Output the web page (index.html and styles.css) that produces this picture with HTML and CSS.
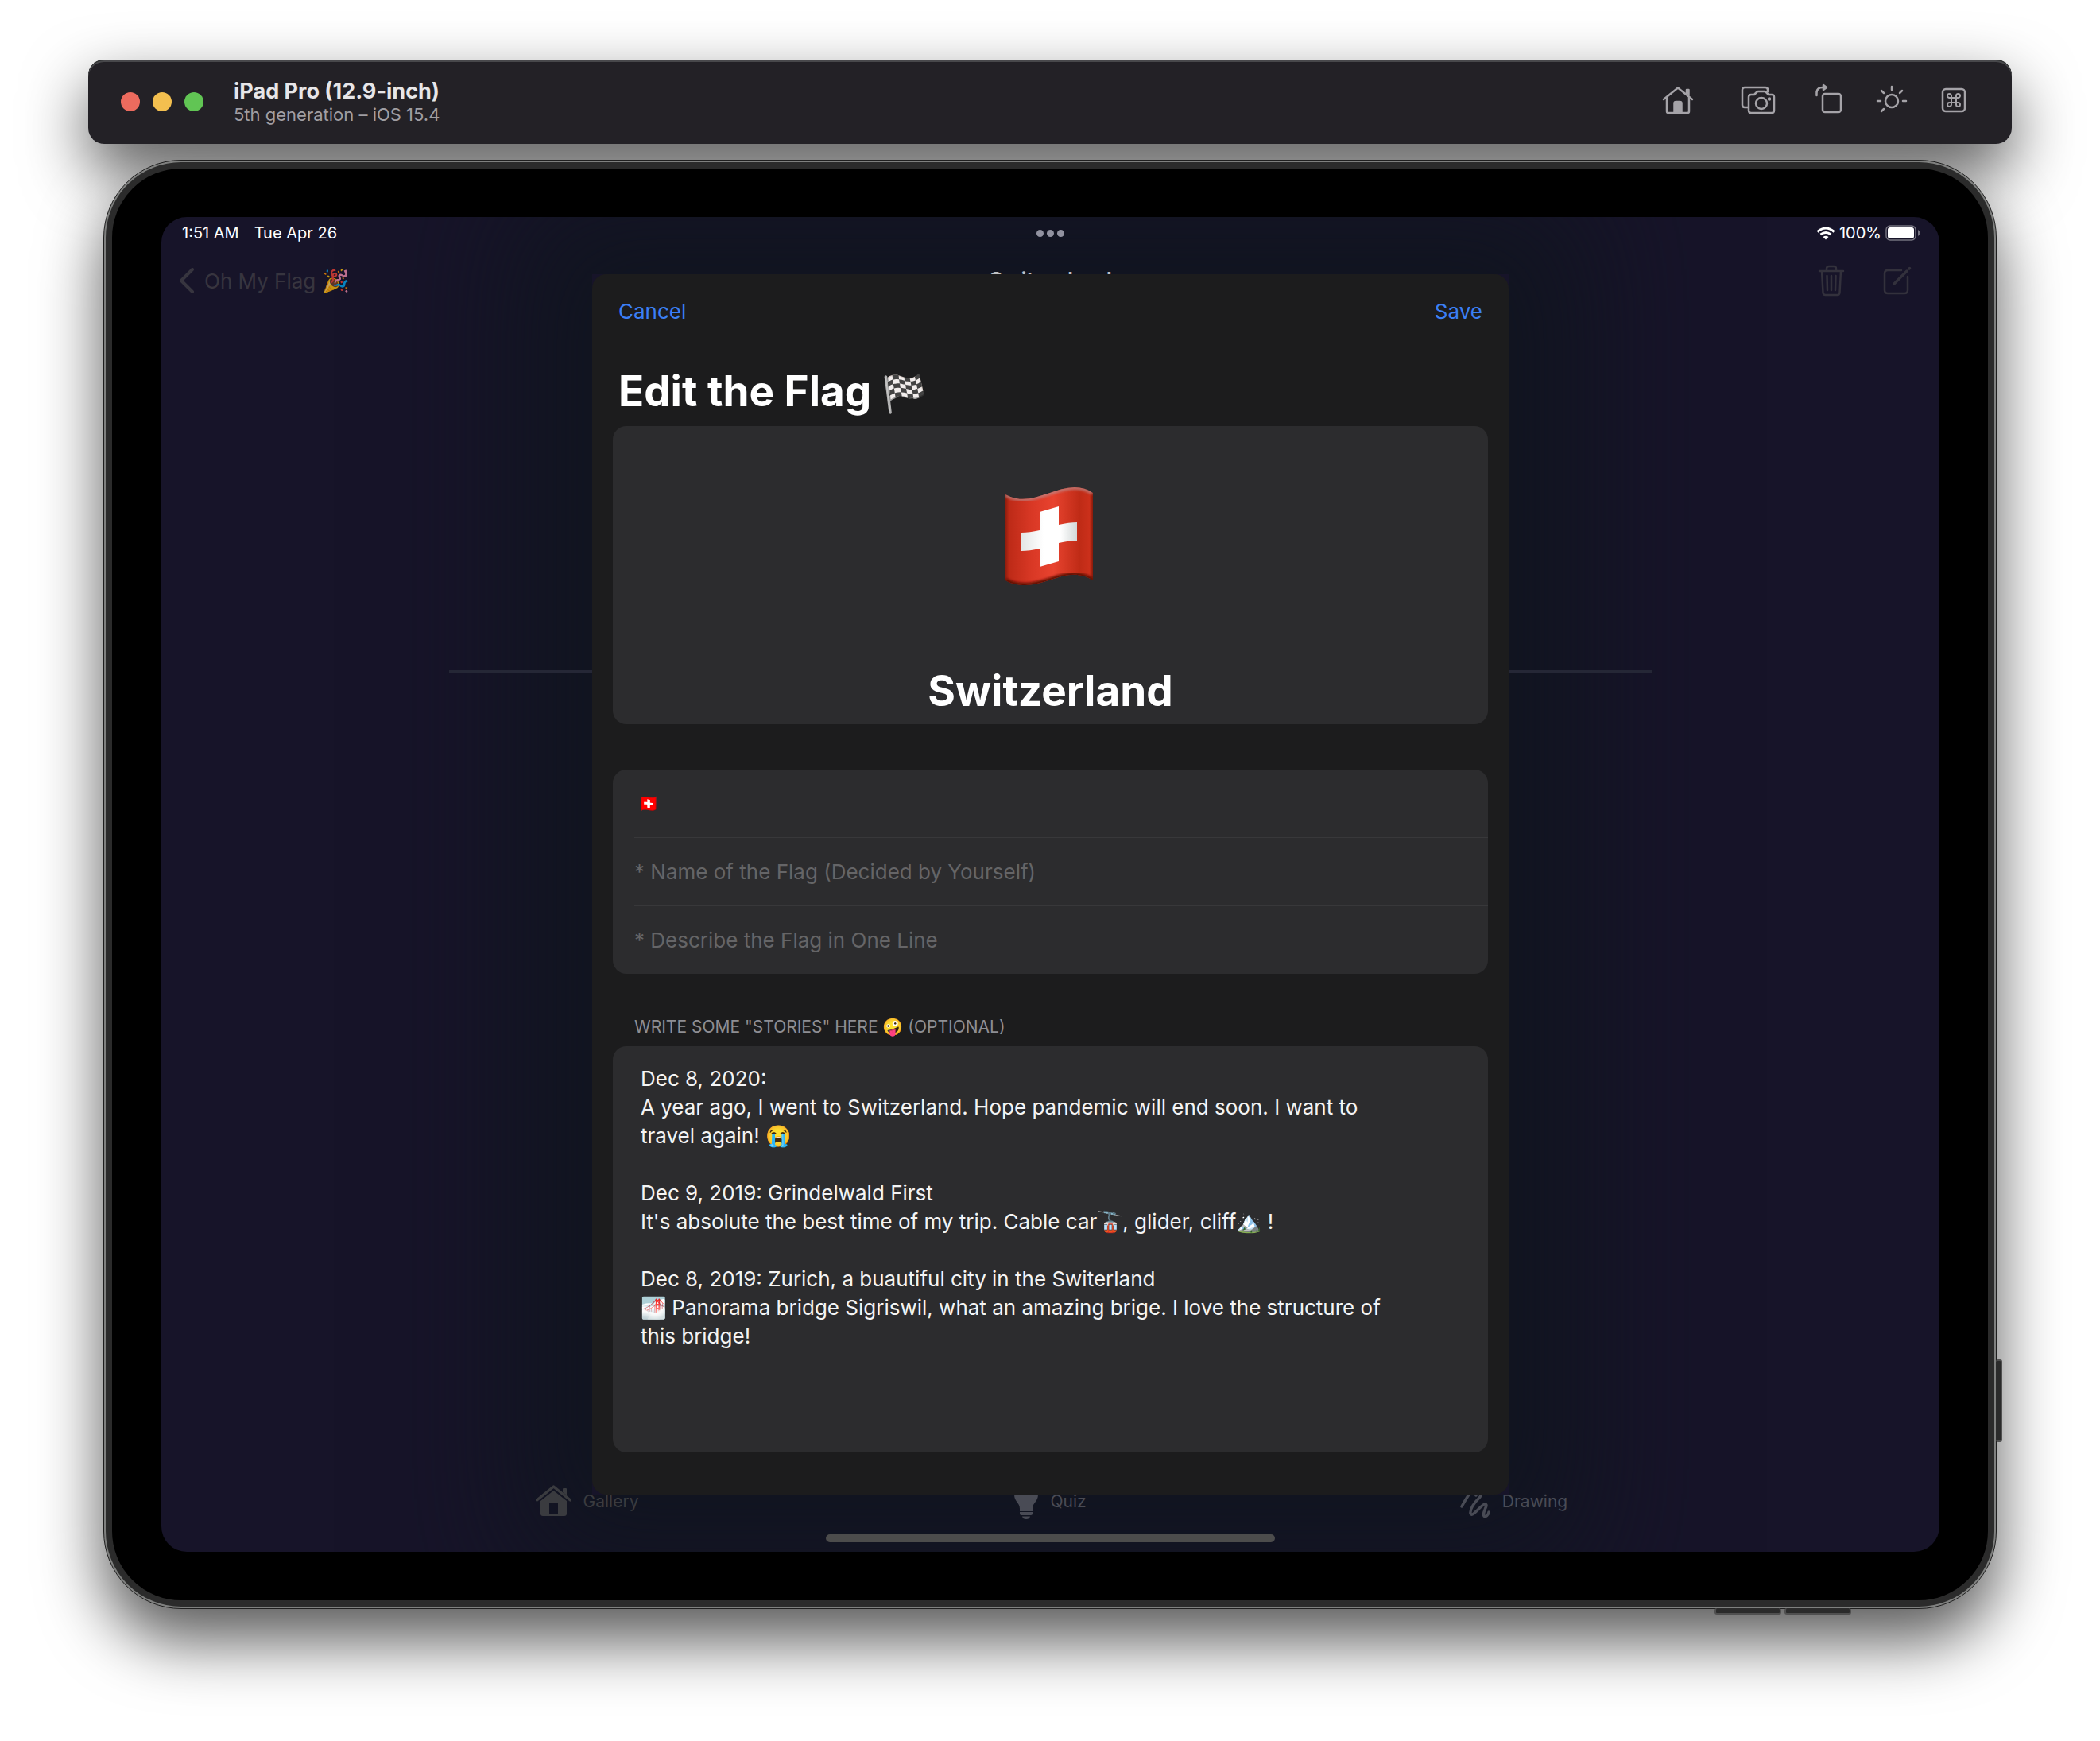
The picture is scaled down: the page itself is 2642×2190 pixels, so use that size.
FILE: index.html
```html
<!DOCTYPE html>
<html lang="en">
<head>
<meta charset="utf-8">
<meta name="viewport" content="width=device-width, initial-scale=1">
<title>iPad Pro (12.9-inch)</title>
<link rel="stylesheet" href="styles.css">
</head>
<body>
<header class="toolbar">
  <div class="lights">
    <button class="light light-close" aria-label="Close"></button>
    <button class="light light-min" aria-label="Minimize"></button>
    <button class="light light-zoom" aria-label="Zoom"></button>
  </div>
  <div class="window-title">
    <h1 class="device-name">iPad Pro (12.9-inch)</h1>
    <p class="device-os">5th generation – iOS 15.4</p>
  </div>
  <div class="tools">
    <button class="tool tool-home" aria-label="Home"><svg width="40" height="36" viewBox="0 0 40 36"><path d="M2 17 20 2.500 38 17M6 15V32Q6 34 8 34H32Q34 34 34 32V15M31 10V5H33.500V12"/><path class="solid" d="M15.500 34V22Q15.500 20 17.500 20H22.500Q24.500 20 24.500 22V34Z"/></svg></button>
    <button class="tool tool-camera" aria-label="Screenshot"><svg width="44" height="36" viewBox="0 0 44 36"><path d="M9 27H5Q2 27 2 24V5Q2 2 5 2H31Q34 2 34 5V7M13 11H17L20 8Q21 7 22 7H30Q31 7 32 8L35 11H39Q42 11 42 14V31Q42 34 39 34H13Q10 34 10 31V14Q10 11 13 11Z"/><circle cx="26" cy="22" r="7"/><circle class="solid" cx="36" cy="16.500" r="1"/></svg></button>
    <button class="tool" aria-label="Rotate"><svg width="34" height="42" viewBox="0 0 34 42"><rect x="9" y="13" width="23" height="23" rx="3"/><path d="M1.500 15V12Q1.500 5 9 5H10"/><path class="solid" d="M10 2 14 5 10 8Z"/></svg></button>
    <button class="tool" aria-label="Appearance"><svg width="40" height="38" viewBox="0 0 40 38"><circle cx="20" cy="20" r="8"/><path d="M20 2V6M33 7 30 10M38 20H34M2 20H6M7 7 10 10M7 33 10 30"/></svg></button>
    <button class="tool" aria-label="Keyboard"><svg width="32" height="32" viewBox="0 0 32 32"><rect x="2" y="2" width="28" height="28" rx="4"/><path class="thin" d="M13 13H10.500A2.500 2.500 0 1 1 13 10.500V21.500A2.500 2.500 0 1 1 10.500 19H21.500A2.500 2.500 0 1 1 19 21.500V10.500A2.500 2.500 0 1 1 21.500 13Z"/></svg></button>
  </div>
</header>

<main class="device">
  <span class="side-button side-button-top"></span>
  <span class="side-button side-button-down"></span>
  <span class="side-button side-button-up"></span>
  <div class="bezel">
    <div class="screen">
      <div class="backdrop">
        <div class="status">
          <div class="status-left"><span>1:51 AM</span><span>Tue Apr 26</span></div>
          <div class="dots"><i class="dot"></i><i class="dot"></i><i class="dot"></i></div>
          <div class="status-right">
            <svg width="24" height="17" viewBox="0 0 24 17" fill="none" stroke="#fff" stroke-width="3"><path d="M1.500 6.500Q12-2.500 22.500 6.500M5.500 10Q12 5 18.500 10"/><path d="M12 16.500 8.500 13Q12 10.500 15.500 13Z" fill="#fff" stroke="none"/></svg>
            <span>100%</span>
            <svg width="45" height="20" viewBox="0 0 45 20"><rect x="1" y="1" width="37" height="18" rx="5" fill="none" stroke="#73717e" stroke-width="1.500"/><rect x="3" y="3" width="33" height="14" rx="3" fill="#fff"/><path d="M41 6Q44 8 44 10 44 12 41 14Z" fill="#73717e"/></svg>
          </div>
        </div>
        <nav class="nav">
          <a class="back" href="#gallery"><svg width="20" height="32" viewBox="0 0 20 32" fill="none" stroke="currentColor" stroke-width="4" stroke-linecap="round" stroke-linejoin="round"><path d="M17 2 3 16 17 30"/></svg><span>Oh My Flag <span class="dim-emoji">🎉</span></span></a>
          <h2 class="nav-title">Switzerland</h2>
          <div class="nav-actions">
            <button class="nav-action" aria-label="Delete"><svg width="34" height="40" viewBox="0 0 34 40"><path d="M2 8H32M11 8V5Q11 2 14 2H20Q23 2 23 5V8M5 8 6.500 35Q6.700 38 9.500 38H24.500Q27.300 38 27.500 35L29 8M11.500 14 12 32M17 14V32M22.500 14 22 32"/></svg></button>
            <button class="nav-action" aria-label="Edit"><svg width="36" height="36" viewBox="0 0 36 36"><path d="M23 5H6Q2 5 2 9V30Q2 34 6 34H27Q31 34 31 30V13"/><path class="pencil" d="M14 22 30 6M33 3 33.500 2.500"/></svg></button>
          </div>
        </nav>
        <div class="rule"></div>
        <nav class="tabs">
          <a class="tab tab-current" href="#gallery"><svg width="45" height="40" viewBox="0 0 45 40"><path d="M1.500 19 22.500 2 43.500 19" fill="none" stroke="currentColor" stroke-width="3.500" stroke-linecap="round" stroke-linejoin="round"/><path fill="currentColor" fill-rule="evenodd" d="M34 9V5Q34 4 35 4H38Q39 4 39 5V13ZM6 20 22.500 7 39 20V36Q39 39 36 39H9Q6 39 6 36ZM18 22Q17 22 17 23V36H28V23Q28 22 27 22Z"/></svg><span>Gallery</span></a>
          <a class="tab" href="#quiz"><svg width="30" height="46" viewBox="0 0 30 46" fill="currentColor"><path d="M15 0A15 15 0 0 1 30 15C30 24 23 25 23 33V36H7V33C7 25 0 24 0 15A15 15 0 0 1 15 0ZM7 37H23V39Q23 41 21 41H9Q7 41 7 39ZM10 42.500H20Q19 46 15 46 11 46 10 42.500Z"/></svg><span>Quiz</span></a>
          <a class="tab" href="#drawing"><svg width="38" height="44" viewBox="0 0 38 44" fill="none" stroke="currentColor" stroke-width="3.500" stroke-linecap="round" stroke-linejoin="round"><path d="M2 29C8 18 14 8 20 4 24 2 24 8 20 15M25 17C18 24 12 32 13 38 15 44 27 26 31 26 37 26 27 36 30 41 32 43 36 39 36 36M25 17 27 13"/></svg><span>Drawing</span></a>
        </nav>
        <div class="home-indicator"></div>
      </div>

      <form class="sheet">
        <div class="sheet-bar">
          <button class="sheet-action" type="button">Cancel</button>
          <button class="sheet-action" type="button">Save</button>
        </div>
        <h2 class="sheet-title">Edit the Flag <span class="title-emoji">🏁</span></h2>
        <section class="card preview">
          <svg class="flag" width="114" height="124" viewBox="0 0 114 124" role="img" aria-label="Flag of Switzerland">
            <defs>
              <linearGradient id="cloth"><stop offset="0" stop-color="#8e1c0c"/><stop offset=".04" stop-color="#bd2a17"/><stop offset=".3" stop-color="#d93825"/><stop offset=".55" stop-color="#e8432f"/><stop offset=".85" stop-color="#bf2b16"/><stop offset=".96" stop-color="#cb301b"/><stop offset="1" stop-color="#8a1a0a"/></linearGradient>
              <linearGradient id="cross"><stop offset="0" stop-color="#e4e6e6"/><stop offset=".4" stop-color="#fff"/><stop offset=".7" stop-color="#fff"/><stop offset="1" stop-color="#d3d8d8"/></linearGradient>
              <clipPath id="flag-shape"><path d="M0 9C30 26 58 0 87 0Q100 0 110 7V117C80 98 55 123 25 123 12 123 5 120 0 117Z"/></clipPath>
              <filter id="soften"><feGaussianBlur stdDeviation="1.500"/></filter>
            </defs>
            <g clip-path="url(#flag-shape)">
              <path d="M0 0H110V124H0Z" fill="url(#cloth)"/>
              <path d="M0 9C30 26 58 0 87 0Q100 0 110 7" fill="none" stroke="#b88" stroke-width="6" opacity=".7" filter="url(#soften)"/>
              <path d="M0 117C5 120 12 123 25 123 55 123 80 98 110 117" fill="none" stroke="#5e1006" stroke-width="6" filter="url(#soften)"/>
            </g>
            <path d="M43 31 67 24V47Q80 44 90 44V67Q80 67 67 70V93L43 100V77Q30 80 20 80V57Q30 57 43 54Z" fill="url(#cross)"/>
          </svg>
          <p class="country">Switzerland</p>
        </section>
        <section class="card fields">
          <input class="field field-emoji" type="text" aria-label="Emoji" value="🇨🇭">
          <input class="field" type="text" aria-label="Name" placeholder="* Name of the Flag (Decided by Yourself)">
          <input class="field" type="text" aria-label="Description" placeholder="* Describe the Flag in One Line">
        </section>
        <label class="stories-label" for="stories">WRITE SOME "STORIES" HERE 🤪 (OPTIONAL)</label>
        <textarea class="card stories" id="stories" spellcheck="false">Dec 8, 2020:
A year ago, I went to Switzerland. Hope pandemic will end soon. I want to travel again! 😭

Dec 9, 2019: Grindelwald First
It's absolute the best time of my trip. Cable car🚡, glider, cliff🏔️ !

Dec 8, 2019: Zurich, a buautiful city in the Switerland
🌁 Panorama bridge Sigriswil, what an amazing brige. I love the structure of this bridge!</textarea>
      </form>
    </div>
  </div>
</main>
</body>
</html>
```
FILE: styles.css
```css
* {
  box-sizing: border-box;
}

body {
  margin: 0;
  padding: 75px 111px 160px;
  background: #fff;
  font-family: Inter, "Liberation Sans", sans-serif;
}

h1, h2, p {
  margin: 0;
}

button {
  padding: 0;
  border: 0;
  background: none;
  color: inherit;
  font: inherit;
}

a {
  color: inherit;
  text-decoration: none;
}

svg {
  display: block;
}

/* Simulator toolbar */
.toolbar {
  position: relative;
  z-index: 1;
  display: flex;
  align-items: center;
  height: 106px;
  padding: 0 57px 0 41px;
  border-radius: 20px;
  background: #232126;
  box-shadow: inset 0 1px 0 #2d302f, inset 0 3px 0 #48484b;
}

/* The shadow sits on its own layer, under the device */
body::before {
  content: "";
  position: absolute;
  top: 75px;
  left: 111px;
  right: 111px;
  height: 106px;
  border-radius: 20px;
  box-shadow: 0 34px 80px rgba(0, 0, 0, .65);
}

.lights {
  display: flex;
  gap: 16px;
}

.light {
  width: 24px;
  height: 24px;
  border-radius: 50%;
}

.light-close { background: #ec6b5e; }
.light-min { background: #f3bf4f; }
.light-zoom { background: #61c554; }

.window-title {
  margin-left: 38px;
  padding-top: 2px;
}

.device-name {
  color: #e7e6e8;
  font-size: 27px;
  font-weight: 700;
  line-height: 30px;
}

.device-os {
  color: #a09ea3;
  font-size: 22px;
  line-height: 28px;
}

.tools {
  display: flex;
  align-items: center;
  gap: 42px;
  margin-left: auto;
  padding-bottom: 4px;
}

.tool-home { margin-right: 17px; }
.tool-camera { margin-right: 8px; }

.tool svg {
  fill: none;
  stroke: #a5a3a8;
  stroke-width: 2.5;
  stroke-linecap: round;
  stroke-linejoin: round;
}

.tool .solid { fill: #a5a3a8; }
.tool .thin { stroke-width: 2; }

/* Device frame */
.device {
  position: relative;
  margin: 20px 19px 0;
  padding: 2px;
  border: 1px solid #1f1f1f;
  border-radius: 98px;
  background: #7f807f;
  box-shadow: 0 40px 80px rgba(0, 0, 0, .65);
}

.bezel {
  padding: 61px 61px 61px 62px;
  border: 8px solid #2b2b2b;
  border-radius: 95px;
  background: #000;
}

.side-button {
  position: absolute;
  border: 2px solid #505050;
  border-radius: 3px;
  background: #2b2b2b;
}

.side-button-top {
  right: -8px;
  bottom: 209px;
  width: 8px;
  height: 104px;
  border-left: 0;
}

.side-button-down,
.side-button-up {
  bottom: -8px;
  width: 84px;
  height: 8px;
  border-top: 0;
}

.side-button-down { right: 270px; }
.side-button-up { right: 182px; }

/* Screen: the app behind and the sheet share one grid cell */
.screen {
  display: grid;
  overflow: hidden;
  border-radius: 32px;
  background: #171429;
}

.screen::before,
.backdrop,
.sheet {
  grid-area: 1 / 1;
}

.screen::before {
  content: "";
  justify-self: center;
  width: 100%;
  max-width: 1153px;
  margin: 72px 0;
  box-shadow: 0 0 150px 100px #111520;
}

.backdrop {
  position: relative;
  display: flex;
  flex-direction: column;
  align-items: center;
}

.status,
.nav {
  display: grid;
  grid-template-columns: 1fr auto 1fr;
  align-items: center;
  width: 100%;
}

.status {
  height: 40px;
  padding: 0 23px;
  color: #fff;
  font-size: 20px;
}

.status-left {
  display: flex;
  gap: 19px;
  padding-left: 3px;
}

.status-right {
  display: flex;
  align-items: center;
  justify-content: flex-end;
  gap: 5px;
}

.dots {
  display: flex;
  gap: 4px;
}

.dot {
  width: 9px;
  height: 9px;
  border-radius: 50%;
  background: #9192a0;
}

.nav {
  height: 80px;
  padding: 0 22px;
  color: #37353f;
  font-size: 26px;
  line-height: 32px;
}

.back {
  display: flex;
  align-items: center;
  gap: 12px;
}

.dim-emoji {
  opacity: .75;
  color: #000;
  font-size: 28px;
}

.nav-title {
  color: #bfc1c4;
  font-size: 27px;
  font-weight: 600;
  line-height: 32px;
}

.nav-actions {
  display: flex;
  align-items: center;
  justify-content: flex-end;
  gap: 48px;
  padding-right: 13px;
}

.nav-action svg {
  fill: none;
  stroke: #33313c;
  stroke-width: 2.5;
  stroke-linecap: round;
  stroke-linejoin: round;
}

.nav-action .pencil {
  stroke-width: 3.5;
}

.rule {
  width: 100%;
  max-width: 1513px;
  height: 3px;
  margin-top: 450px;
  background: #252736;
}

.tabs {
  display: flex;
  width: 100%;
  max-width: 1749px;
  margin-top: auto;
  color: #494b55;
  font-size: 21px;
}

.tab {
  display: flex;
  flex: 1;
  align-items: center;
  justify-content: center;
  gap: 15px;
  height: 46px;
}

.tab-current {
  color: #3a3b3f;
}

.home-indicator {
  width: 565px;
  height: 10px;
  margin: 19px 0 12px;
  border-radius: 5px;
  background: #4c4c4c;
}

/* Edit sheet */
.sheet {
  position: relative;
  justify-self: center;
  width: 100%;
  max-width: 1153px;
  margin: 72px 0;
  padding: 0 26px 53px;
  border-radius: 18px;
  background: #1c1c1d;
  color: #fff;
  font-size: 26px;
}

.sheet-bar {
  display: flex;
  align-items: center;
  justify-content: space-between;
  height: 92px;
  padding: 0 7px;
  color: #3b7ff5;
}

.sheet-title {
  margin: 23px 0 12px;
  padding: 0 7px;
  font-size: 53px;
  font-weight: 700;
  line-height: 64px;
}

.title-emoji {
  font-size: 46px;
  line-height: 52px;
}

.card {
  border-radius: 17px;
  background: #2c2c2e;
}

.preview {
  display: flex;
  flex-direction: column;
  align-items: center;
  gap: 100px;
  padding: 77px 26px 10px;
}

.country {
  font-size: 53px;
  font-weight: 700;
  line-height: 64px;
}

.fields {
  display: flex;
  flex-direction: column;
  margin-top: 57px;
  padding-left: 27px;
}

.field {
  height: 85px;
  padding: 0;
  border: 0;
  outline: 0;
  background: none;
  color: #fff;
  font: inherit;
}

.field + .field {
  height: 86px;
  border-top: 1px solid #38383a;
}

.field::placeholder {
  color: #656567;
  opacity: 1;
}

.field-emoji {
  padding-left: 5px;
  font-size: 21px;
}

.stories-label {
  display: block;
  margin: 53px 0 10px;
  padding-left: 27px;
  color: #8e8e93;
  font-size: 21px;
  line-height: 28px;
}

.stories {
  display: block;
  width: 100%;
  height: 511px;
  padding: 23px 104px 22px 35px;
  border: 0;
  outline: 0;
  color: #f4f4f4;
  font: inherit;
  line-height: 36px;
  resize: none;
}
```
